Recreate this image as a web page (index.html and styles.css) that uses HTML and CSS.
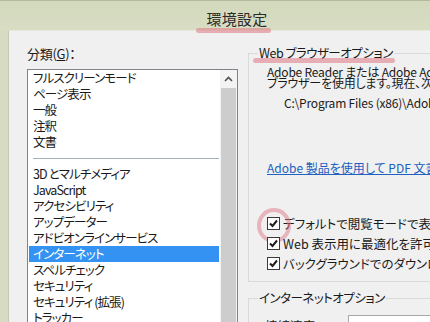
FILE: index.html
```html
<!DOCTYPE html>
<html lang="ja">
<head>
<meta charset="utf-8">
<title>環境設定</title>
<link rel="stylesheet" href="styles.css">
</head>
<body>
<div class="window">
  <div class="titlebar"><span class="title">環境設定</span></div>
  <div class="frame">
    <div class="content">
      <div class="left">
        <div class="label">分類(<u>G</u>)：</div>
        <div class="listbox">
          <ul class="items">
            <li>フルスクリーンモード</li>
            <li>ページ表示</li>
            <li>一般</li>
            <li>注釈</li>
            <li>文書</li>
            <li class="sep"><span></span></li>
            <li>3D とマルチメディア</li>
            <li>JavaScript</li>
            <li>アクセシビリティ</li>
            <li>アップデーター</li>
            <li>アドビオンラインサービス</li>
            <li class="sel">インターネット</li>
            <li>スペルチェック</li>
            <li>セキュリティ</li>
            <li>セキュリティ (拡張)</li>
            <li>トラッカー</li>
          </ul>
          <div class="scrollbar">
            <div class="sb-btn">
              <svg width="9" height="6" viewBox="0 0 9 6"><path d="M1 5 L4.5 1.5 L8 5" fill="none" stroke="#505050" stroke-width="1.6"/></svg>
            </div>
            <div class="sb-thumb"></div>
          </div>
        </div>
      </div>
      <div class="right">
        <fieldset class="group g1">
          <legend><span class="mark">Web ブラウザーオプション</span></legend>
          <p class="desc">Adobe Reader または Adobe Acrobat を使用して PDF を開くように Web<br>ブラウザーを使用します。現在、次のアプリケーションを使用しています：</p>
          <p class="path">C:\Program Files (x86)\Adobe\Acrobat Reader DC\Reader\AcroRd32.exe</p>
          <p class="link"><a href="#">Adobe 製品を使用して PDF 文書を表示するための Web ブラウザーの設定</a></p>
          <div class="checks">
            <label class="check circled"><span class="box"><svg width="11" height="11" viewBox="0 0 11 11"><path d="M2 5.5 L4.5 8 L9 2.5" fill="none" stroke="#1e1e1e" stroke-width="2"/></svg></span>デフォルトで閲覧モードで表示</label>
            <label class="check"><span class="box"><svg width="11" height="11" viewBox="0 0 11 11"><path d="M2 5.5 L4.5 8 L9 2.5" fill="none" stroke="#1e1e1e" stroke-width="2"/></svg></span>Web 表示用に最適化を許可</label>
            <label class="check"><span class="box"><svg width="11" height="11" viewBox="0 0 11 11"><path d="M2 5.5 L4.5 8 L9 2.5" fill="none" stroke="#1e1e1e" stroke-width="2"/></svg></span>バックグラウンドでのダウンロードを許可</label>
          </div>
        </fieldset>
        <fieldset class="group g2">
          <legend>インターネットオプション</legend>
          <div class="row">
            <span class="rlabel">接続速度：</span>
            <span class="input"></span>
          </div>
        </fieldset>
      </div>
    </div>
  </div>
</div>
</body>
</html>
```

FILE: styles.css
```css
* { box-sizing: border-box; }
html, body {
  margin: 0;
  padding: 0;
  width: 430px;
  height: 322px;
  overflow: hidden;
}
body {
  background: #d6dbc1;
  font-family: "Noto Sans CJK JP", "Noto Sans", sans-serif;
  font-feature-settings: "palt";
  color: #1a1a1a;
}
.window {
  display: flex;
  flex-direction: column;
  height: 322px;
}
.titlebar {
  height: 30px;
  border-top: 1px solid #b3b99f;
  padding-top: 5px;
  text-align: center;
  background: linear-gradient(#d3d9bd, #d8ddc3);
  padding-left: 44px;
}
.title {
  position: relative;
  display: inline-block;
  font-size: 15px;
  line-height: 20px;
  color: #2a2a2a;
  letter-spacing: 0.3px;
}
.title::after {
  content: "";
  position: absolute;
  left: -10px;
  right: -3px;
  top: 19px;
  height: 5px;
  border-radius: 3px;
  background: rgba(222, 118, 132, 0.55);
  filter: blur(0.7px);
}
.frame {
  flex: 1;
  padding-left: 8px;
  min-height: 0;
}
.content {
  height: 100%;
  background: #f0f0f0;
  border-left: 1px solid #c3c8b0;
  border-top: 1px solid #e6e9dc;
  display: flex;
  gap: 10px;
  padding: 15px 0 0 18px;
  overflow: hidden;
}
.left {
  width: 211px;
  flex-shrink: 0;
  display: flex;
  flex-direction: column;
}
.label {
  font-size: 13px;
  line-height: 16px;
  margin-bottom: 7px;
  letter-spacing: -0.3px;
}
.label u { text-underline-offset: 1px; }
.listbox {
  flex: 1;
  border: 1px solid #7f838a;
  border-bottom: none;
  background: #fff;
  display: flex;
  min-height: 0;
}
.items {
  list-style: none;
  margin: 0;
  padding: 0 1px;
  flex: 1;
  font-size: 12.5px;
  letter-spacing: -0.9px;
  line-height: 16px;
  white-space: nowrap;
}
.items li {
  padding-left: 4px;
  height: 16px;
}
.items li.sel {
  background: #3493f2;
  color: #fff;
}
.items li.sep {
  height: 16px;
  padding: 8px 0 0 4px;
}
.items li.sep span {
  display: block;
  height: 1px;
  background: #a7b0ba;
}
.scrollbar {
  width: 17px;
  padding: 0 1px;
  background: #f3f3f3;
  display: flex;
  flex-direction: column;
}
.sb-btn {
  height: 17px;
  display: flex;
  align-items: center;
  justify-content: center;
}
.sb-thumb {
  flex: 1;
  background: #cdcdcd;
  margin-top: 1px;
}
.right {
  width: 260px;
  flex-shrink: 0;
}
.group {
  margin: 0;
  border: 1px solid #dadada;
  border-right: none;
  padding: 0 0 8px 18px;
  min-width: 0;
}
.group legend {
  font-size: 12.5px;
  letter-spacing: -0.5px;
  line-height: 14px;
  padding: 0 1px;
  margin-left: -9px;
  white-space: nowrap;
}
.mark {
  position: relative;
  display: inline-block;
}
.mark::after {
  content: "";
  position: absolute;
  left: -6px;
  right: -2px;
  top: 12px;
  height: 5px;
  border-radius: 3px;
  background: rgba(222, 118, 132, 0.55);
  filter: blur(0.7px);
}
.group p {
  margin: 0;
  white-space: nowrap;
  font-size: 12px;
}
.desc {
  line-height: 11px;
  margin-top: 6px !important;
  letter-spacing: -0.2px;
}
.path {
  line-height: 14px;
  margin-top: 8px !important;
  padding-left: 17px;
  letter-spacing: -0.2px;
}
.link {
  line-height: 14px;
  margin-top: 51px !important;
}
.link a {
  color: #2160bf;
  text-decoration: underline;
  text-underline-offset: 1px;
}
.checks {
  margin-top: 38px;
  display: flex;
  flex-direction: column;
}
.check {
  height: 20px;
  display: flex;
  align-items: center;
  gap: 3px;
  font-size: 12.5px;
  white-space: nowrap;
  position: relative;
}
.box {
  width: 13px;
  height: 13px;
  border: 1px solid #3a3a3a;
  background: #fff;
  display: flex;
  align-items: center;
  justify-content: center;
  flex-shrink: 0;
}
.circled::before {
  content: "";
  position: absolute;
  left: -10px;
  top: -5px;
  width: 26px;
  height: 27px;
  border-radius: 50%;
  border: 4px solid rgba(224, 120, 135, 0.5);
  filter: blur(0.6px);
}
.g2 {
  margin-top: 9px;
}
.row {
  margin-top: 10px;
  display: flex;
  align-items: center;
  height: 20px;
}
.rlabel {
  font-size: 12.5px;
  width: 83px;
  margin-left: -2px;
}
.input {
  width: 90px;
  height: 20px;
  border: 1px solid #a8a8a8;
  background: #fff;
}
```
